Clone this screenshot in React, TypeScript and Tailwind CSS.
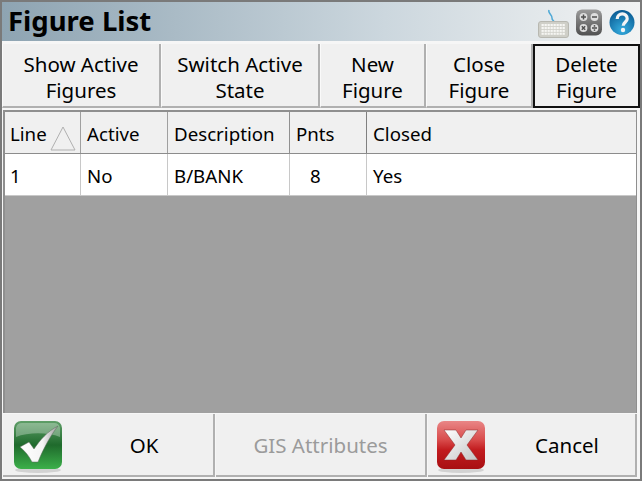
const sans = "font-['Noto_Sans','Open_Sans',sans-serif]";

function Keyboard() {
  const keys = [];
  for (let r = 0; r < 4; r++)
    for (let c = 0; c < 8; c++)
      keys.push(<rect key={`${r}-${c}`} x={3.5 + c * 3} y={15 + r * 2.9} width={2.3} height={2.1} fill="#f6f6f3" />);
  return (
    <svg width="31" height="30" viewBox="0 0 31 30" className="shrink-0">
      <path d="M11 1c-1.500 3 3.500 5 3 8-.3 1.600 1 2.500 2 3.500" fill="none" stroke="#4fa9d6" strokeWidth="1.500" />
      <rect x="0.500" y="12.500" width="30" height="16" rx="2.500" fill="#cfcfc8" stroke="#b8b8b1" strokeWidth="1" />
      {keys}
    </svg>
  );
}

function Calc() {
  const c = "#4f4f4f";
  return (
    <svg width="26" height="28" viewBox="0 0 26 28" className="shrink-0">
      <defs>
        <linearGradient id="cg" x1="0" y1="0" x2="0" y2="1">
          <stop offset="0" stopColor="#9b9b9b" />
          <stop offset="1" stopColor="#505050" />
        </linearGradient>
      </defs>
      <rect x="0" y="0.500" width="26" height="26" rx="6" fill="url(#cg)" />
      <circle cx="7.500" cy="8" r="3.900" fill="#dedede" />
      <circle cx="18.500" cy="8" r="3.900" fill="#dedede" />
      <circle cx="7.500" cy="19" r="3.900" fill="#dedede" />
      <circle cx="18.500" cy="19" r="3.900" fill="#dedede" />
      <path d="M5 8h5M7.500 5.500v5M16 8h5M5.800 17.300l3.400 3.400M9.200 17.300l-3.400 3.400M16 19h5" stroke={c} strokeWidth="1.500" />
      <circle cx="18.500" cy="16.900" r=".9" fill={c} />
      <circle cx="18.500" cy="21.100" r=".9" fill={c} />
    </svg>
  );
}

function Help() {
  return (
    <svg width="26" height="28" viewBox="0 0 26 28" className="shrink-0">
      <defs>
        <radialGradient id="hg" cx="0.500" cy="0.800" r="0.800">
          <stop offset="0" stopColor="#35addf" />
          <stop offset="1" stopColor="#0a5a92" />
        </radialGradient>
      </defs>
      <circle cx="13" cy="13.500" r="12.500" fill="url(#hg)" />
      <path d="M8.200 10c0-7 10.400-6.400 10-.2-.2 3.400-4 3.600-4 7" fill="none" stroke="#f4f4f4" strokeWidth="3.200" />
      <circle cx="14" cy="21" r="2.200" fill="#f4f4f4" />
    </svg>
  );
}

function CheckIcon() {
  return (
    <svg width="50" height="54" viewBox="0 0 50 54" className="shrink-0 mt-[2px]">
      <defs>
        <linearGradient id="gg" x1="0" y1="0" x2="0" y2="1">
          <stop offset="0" stopColor="#5f9f68" />
          <stop offset="0.5" stopColor="#1f6a2c" />
          <stop offset="1" stopColor="#3cb04a" />
        </linearGradient>
        <linearGradient id="gs" x1="0" y1="0" x2="1" y2="0">
          <stop offset="0" stopColor="#ffffff" />
          <stop offset="0.6" stopColor="#f4f4f4" />
          <stop offset="1" stopColor="#9a9a9a" />
        </linearGradient>
      </defs>
      <ellipse cx="25" cy="50" rx="23" ry="3" fill="#d2d2d2" />
      <rect x="1" y="1" width="48" height="48" rx="7" fill="url(#gg)" />
      <path d="M3 8a6 6 0 0 1 6-5h32a6 6 0 0 1 6 5v9c-12-5-32-5-44 0z" fill="#ffffff" fillOpacity="0.3" />
      <path d="M7 27l9-5 5 7C27 20 35 11 45 6 38 15 31 27 25 42h-6c-3-6-7-11-12-15z" fill="url(#gs)" stroke="#5c6b5c" strokeWidth=".5" />
    </svg>
  );
}

function CrossIcon() {
  return (
    <svg width="50" height="54" viewBox="0 0 50 54" className="shrink-0 mt-[2px]">
      <defs>
        <linearGradient id="rg" x1="0" y1="0" x2="0" y2="1">
          <stop offset="0" stopColor="#e98686" />
          <stop offset="0.4" stopColor="#d84a4a" />
          <stop offset="0.6" stopColor="#c21c1f" />
          <stop offset="1" stopColor="#a80f12" />
        </linearGradient>
        <linearGradient id="rs" x1="0" y1="0" x2="1" y2="1">
          <stop offset="0" stopColor="#ffffff" />
          <stop offset="1" stopColor="#c4c4c4" />
        </linearGradient>
      </defs>
      <ellipse cx="25" cy="50" rx="23" ry="3" fill="#d2d2d2" />
      <rect x="1" y="1" width="48" height="48" rx="7" fill="url(#rg)" />
      <path d="M8 10h12l5 8 5-8h12L31 25l11 15H30l-5-8-5 8H8l11-15z" fill="url(#rs)" stroke="#8a2a2a" strokeWidth=".5" />
    </svg>
  );
}

function Btn({ w, a, b, active }: { w: string; a: string; b: string; active?: boolean }) {
  return (
    <div className={`${w} h-full shrink-0 flex flex-col items-center justify-center bg-[#f0f0f0] text-[20.5px] leading-[26px] text-black ${active ? "border-2 border-[#111111] pt-[2px]" : "border-r-2 border-b-2 border-l border-[#b0b0b0] border-l-[#fafafa] pt-[4px]"}`}>
      <span>{a}</span>
      <span>{b}</span>
    </div>
  );
}

function Th({ w, children, cls = "" }: { w: string; children?: React.ReactNode; cls?: string }) {
  return (
    <div className={`${w} shrink-0 h-full flex items-center pl-[6px] pt-[4px] border-r ${cls}`}>{children}</div>
  );
}

export default function App() {
  return (
    <div className={`${sans} w-[642px] h-[481px] overflow-hidden bg-[#f6f6f6] border-2 border-[#7a7a7a] flex flex-col`}>
      <div className="h-[39px] shrink-0 flex items-center justify-between bg-gradient-to-r from-[#8ea4b2] via-[#ccd7de] via-60% to-[#f2f3f3] pl-[6px] pr-[5px]">
        <span className="text-[27.5px] font-bold leading-none text-black pb-[2px]">Figure List</span>
        <div className="flex items-start gap-[7px] pt-[5px]">
          <Keyboard />
          <Calc />
          <Help />
        </div>
      </div>
      <div className="h-[67px] shrink-0 flex pt-[3px]">
        <Btn w="w-[159px]" a="Show Active" b="Figures" />
        <Btn w="w-[159px]" a="Switch Active" b="State" />
        <Btn w="w-[106px]" a="New" b="Figure" />
        <Btn w="w-[107px]" a="Close" b="Figure" />
        <Btn w="w-[107px]" a="Delete" b="Figure" active />
      </div>
      <div className="flex-1 min-h-0 ml-px mr-[3px] mt-[2px] bg-[#a0a0a0] border-t-2 border-l-2 border-r border-[#8f8f8f] flex flex-col text-[18.7px] text-black">
        <div className="h-[42px] shrink-0 flex bg-[#f0f0f0] border-b border-[#8c8c8c] leading-none">
          <Th w="w-[76px]" cls="relative border-[#a0a0a0] !pl-[5px]">
            Line
            <svg width="26" height="25" viewBox="0 0 26 25" className="absolute right-[4px] bottom-[2px]">
              <path d="M1 24L13 1l12 23z" fill="none" stroke="#b0b0b0" strokeWidth="1" />
            </svg>
          </Th>
          <Th w="w-[87px]" cls="border-[#a0a0a0]">Active</Th>
          <Th w="w-[122px]" cls="border-[#909090]">Description</Th>
          <Th w="w-[77px]" cls="border-[#808080]">Pnts</Th>
          <div className="flex-1 flex items-center pl-[6px] pt-[4px]">Closed</div>
        </div>
        <div className="h-[42px] shrink-0 flex bg-white border-b border-[#c8c8c8] leading-none">
          <Th w="w-[76px]" cls="border-[#c8c8c8] !pl-[5px]">1</Th>
          <Th w="w-[87px]" cls="border-[#c8c8c8]">No</Th>
          <Th w="w-[122px]" cls="border-[#c8c8c8]">B/BANK</Th>
          <Th w="w-[77px]" cls="border-[#c8c8c8] !pl-[20px]">8</Th>
          <div className="flex-1 flex items-center pl-[6px] pt-[4px]">Yes</div>
        </div>
      </div>
      <div className="h-[66px] shrink-0 flex gap-px pl-px pr-[3px] pt-[1px] pb-[2px] text-[20.5px] text-black">
        <div className="w-[212px] shrink-0 flex items-center pl-[10px] pt-[2px] bg-[#f0f0f0] border-r-2 border-b-2 border-[#b0b0b0]">
          <CheckIcon />
          <span className="flex-1 text-center pl-[12px]">OK</span>
        </div>
        <div className="w-[211px] shrink-0 flex items-center justify-center pt-[2px] text-[#9b9b9b] bg-[#f0f0f0] border-r-2 border-b-2 border-[#b0b0b0]">GIS Attributes</div>
        <div className="flex-1 flex items-center pl-[8px] pt-[2px] bg-[#f0f0f0] border-r-2 border-b-2 border-[#b0b0b0]">
          <CrossIcon />
          <span className="flex-1 text-center pl-[13px]">Cancel</span>
        </div>
      </div>
    </div>
  );
}
